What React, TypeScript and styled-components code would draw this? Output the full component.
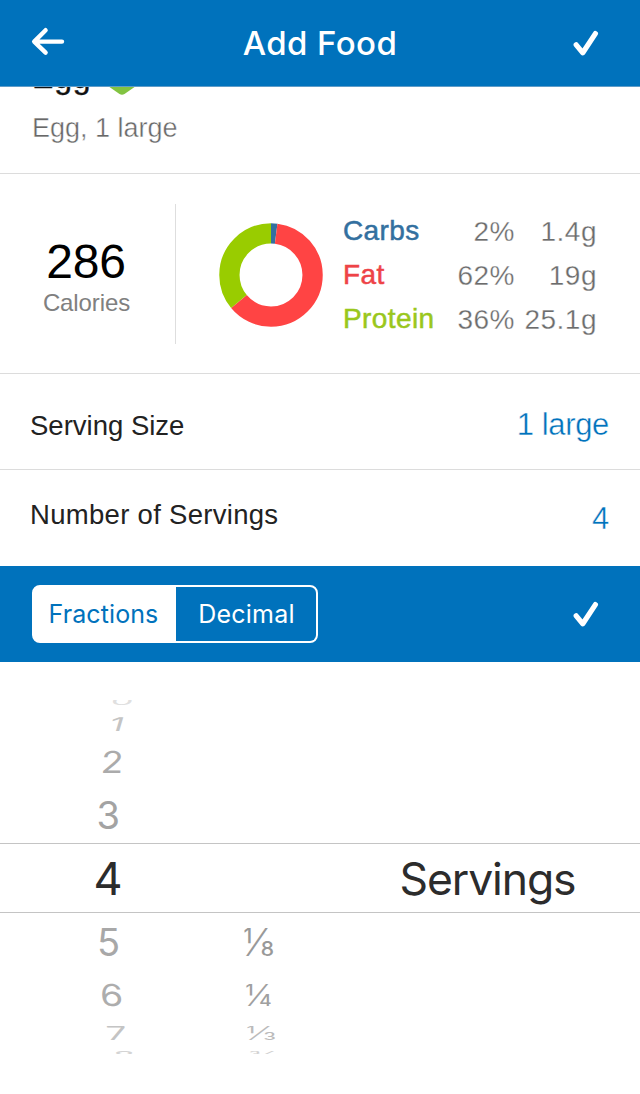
import React from "react";
import styled, { createGlobalStyle } from "styled-components";

const BLUE = "#0072bc";
const HELV = `"Liberation Sans", Arial, Helvetica, sans-serif`;
const SF = `Inter, "Liberation Sans", sans-serif`;

const GlobalStyle = createGlobalStyle`
  * { box-sizing: border-box; }
  body { margin: 0; background: #fff; }
`;

const Screen = styled.main`
  width: 640px;
  height: 1094px;
  overflow: hidden;
  display: flex;
  flex-direction: column;
  background: #fff;
  color: #222;
  font-family: ${HELV};
`;

const NavBar = styled.header`
  flex: none;
  height: 87px;
  display: grid;
  grid-template-columns: 120px 1fr 120px;
  align-items: start;
  background: ${BLUE};
  border-bottom: 1px solid #5f9cc8;
`;

const NavTitle = styled.h1`
  margin: 0;
  text-align: center;
  font: 500 33px/40px ${SF};
  padding-top: 23px;
  letter-spacing: 0.4px;
  color: #fff;
`;

const IconButton = styled.button<{ $side: "left" | "right"; $top: number }>`
  display: flex;
  justify-content: ${(p) => (p.$side === "left" ? "flex-start" : "flex-end")};
  border: 0;
  background: none;
  padding: ${(p) => p.$top}px ${(p) => (p.$side === "right" ? 40 : 0)}px 0
    ${(p) => (p.$side === "left" ? 30 : 0)}px;
`;

const FoodSummary = styled.section`
  flex: none;
  height: 87px;
  overflow: hidden;
  border-bottom: 1px solid #dcdcdc;
  padding-left: 32px;
`;

const FoodName = styled.div`
  display: flex;
  align-items: flex-start;
  gap: 16px;
  height: 36px;
  margin-top: -28px;
  font-size: 32px;
  line-height: 36px;
  letter-spacing: 0.8px;
  color: #111;
  -webkit-text-stroke: 0.4px #111;
`;

const FoodDetail = styled.div`
  margin-top: 16px;
  font-size: 27px;
  line-height: 34px;
  color: #686868;
  -webkit-text-stroke: 0.4px #fff;
`;

const Nutrition = styled.section`
  flex: none;
  height: 200px;
  display: flex;
  align-items: flex-start;
  border-bottom: 1px solid #dcdcdc;
`;

const Calories = styled.div`
  width: 176px;
  height: 140px;
  margin-top: 30px;
  padding: 31px 3px 0 0;
  border-right: 1px solid #dedede;
  text-align: center;
`;

const CalorieCount = styled.div`
  font-size: 48px;
  line-height: 54px;
  letter-spacing: -0.2px;
  color: #000;
`;

const CalorieLabel = styled.div`
  padding-left: 1px;
  font-size: 24px;
  line-height: 28px;
  letter-spacing: -0.1px;
  color: #808080;
`;

const Donut = styled.svg`
  flex: none;
  margin: 48px 0 0 42px;
`;

const MacroTable = styled.div`
  display: grid;
  grid-template-columns: 92px 80px 82px;
  grid-auto-rows: 44px;
  margin: 36px 0 0 19px;
`;

const MacroName = styled.span<{ $color: string }>`
  font-size: 28px;
  line-height: 42px;
  letter-spacing: 0.4px;
  color: ${(p) => p.$color};
  -webkit-text-stroke: 0.5px ${(p) => p.$color};
`;

const MacroValue = styled.span`
  font-size: 28px;
  line-height: 44px;
  letter-spacing: 0.5px;
  text-align: right;
  white-space: nowrap;
  color: #6c6c6c;
  -webkit-text-stroke: 0.3px #fff;
`;

const Field = styled.div<{ $height: number; $line?: boolean }>`
  flex: none;
  height: ${(p) => p.$height}px;
  display: flex;
  justify-content: space-between;
  align-items: flex-start;
  padding: 0 31px 0 30px;
  border-bottom: ${(p) => (p.$line ? "1px solid #dcdcdc" : "0")};
`;

const FieldLabel = styled.span<{ $top: number; $track?: number }>`
  padding-top: ${(p) => p.$top}px;
  font-size: 27.5px;
  line-height: 32px;
  letter-spacing: ${(p) => p.$track ?? 0}px;
  color: #222;
`;

const FieldValue = styled.span<{ $top: number }>`
  padding-top: ${(p) => p.$top}px;
  font-size: 31px;
  line-height: 36px;
  letter-spacing: -0.35px;
  color: ${BLUE};
  -webkit-text-stroke: 0.4px #fff;
`;

const Toolbar = styled.div`
  flex: none;
  height: 96px;
  display: flex;
  justify-content: space-between;
  align-items: flex-start;
  padding-left: 32px;
  background: ${BLUE};
`;

const Segmented = styled.div`
  display: flex;
  width: 286px;
  height: 58px;
  margin-top: 19px;
  border: 2px solid #fff;
  border-radius: 8px;
  background: #fff;
  overflow: hidden;
`;

const Segment = styled.button<{ $active?: boolean; $width: number }>`
  width: ${(p) => p.$width}px;
  height: 54px;
  padding: ${(p) => (p.$active ? "0 3px 0 0" : "0 0 0 1px")};
  border: 0;
  font: 400 25px/54px ${SF};
  letter-spacing: ${(p) => (p.$active ? 0.1 : 0.2)}px;
  color: ${(p) => (p.$active ? BLUE : "#fff")};
  background: ${(p) => (p.$active ? "#fff" : BLUE)};
`;

const Picker = styled.section`
  flex: none;
  display: grid;
  grid-template-columns: 220px 160px 260px;
  padding-top: 38px;
  font-family: ${SF};
`;

const Wheel = styled.div<{ $weight?: number }>`
  display: flex;
  flex-direction: column;
  font-weight: ${(p) => p.$weight ?? 400};
`;

const WheelRow = styled.div<{ $height: number; $selected?: boolean; $indent: number }>`
  display: flex;
  align-items: center;
  height: ${(p) => p.$height}px;
  padding-left: ${(p) => p.$indent}px;
  overflow: hidden;
  border: 0 solid #c4c4c4;
  border-width: ${(p) => (p.$selected ? "1px 0" : "0")};
`;

const WheelText = styled.span<{ $size: number; $color: string; $squash?: number; $skew?: number; $shift?: number; $track?: number }>`
  display: block;
  font-size: ${(p) => p.$size}px;
  line-height: 56px;
  letter-spacing: ${(p) => p.$track ?? 0}px;
  white-space: nowrap;
  color: ${(p) => p.$color};
  transform: translateY(${(p) => p.$shift ?? 0}px) scaleY(${(p) => p.$squash ?? 1})
    skewX(${(p) => p.$skew ?? 0}deg);
`;

type Row = {
  text: string;
  height: number;
  indent: number;
  size: number;
  color: string;
  squash?: number;
  skew?: number;
  shift?: number;
  selected?: boolean;
};

const wholeRows: Row[] = [
  { text: "0", height: 8, indent: 111, size: 36, color: "#e0e0e0", squash: 0.3, skew: -4, shift: -3 },
  { text: "1", height: 31, indent: 110, size: 35, color: "#c4c4c4", squash: 0.54, skew: -9, shift: -0.5 },
  { text: "2", height: 47, indent: 101, size: 37, color: "#ababab", squash: 0.82, skew: -3, shift: -1 },
  { text: "3", height: 57, indent: 96.5, size: 38, color: "#a3a3a3" },
  { text: "4", height: 70, indent: 93.5, size: 45, color: "#2c2c2c", selected: true, shift: 1 },
  { text: "5", height: 58, indent: 97, size: 38, color: "#a8a8a8", shift: -0.5 },
  { text: "6", height: 49, indent: 100, size: 37, color: "#adadad", squash: 0.82, skew: 3, shift: -0.5 },
  { text: "7", height: 28, indent: 106, size: 37, color: "#c4c4c4", squash: 0.52, skew: 4, shift: -0.5 },
  { text: "8", height: 6, indent: 113, size: 36, color: "#d4d4d4", squash: 0.3, shift: 4 },
];

const fractionRows: Row[] = [
  { text: "", height: 143, indent: 0, size: 38, color: "#aaa" },
  { text: "", height: 70, indent: 0, size: 45, color: "#2c2c2c", selected: true },
  { text: "⅛", height: 58, indent: 23, size: 38.5, color: "#999", shift: -0.5 },
  { text: "¼", height: 49, indent: 25, size: 36, color: "#a0a0a0", squash: 0.82, shift: -0.5 },
  { text: "⅓", height: 28, indent: 26, size: 37, color: "#bbb", squash: 0.52, shift: -0.5 },
  { text: "⅜", height: 6, indent: 28, size: 36, color: "#d0d0d0", squash: 0.3, shift: 4 },
];

const unitRows: Row[] = [
  { text: "", height: 143, indent: 0, size: 38, color: "#aaa" },
  { text: "Servings", height: 70, indent: 19.5, size: 44.5, color: "#2c2c2c", selected: true, shift: 1 },
];

const macros = [
  { name: "Carbs", percent: "2%", grams: "1.4g", color: "#33709f" },
  { name: "Fat", percent: "62%", grams: "19g", color: "#ee4347" },
  { name: "Protein", percent: "36%", grams: "25.1g", color: "#9ac71c" },
];

const slices = [
  { color: "#33709f", from: 0, size: 2 },
  { color: "#ff4444", from: 2, size: 62 },
  { color: "#99cc00", from: 64, size: 36 },
];

const CheckIcon = () => (
  <svg width="30" height="32" viewBox="0 0 30 32" fill="none">
    <path d="M6.2 16.8 12.8 24.8 25.4 5.6" stroke="#fff" strokeWidth="5.2" strokeLinecap="round" strokeLinejoin="round" />
  </svg>
);

const BackIcon = () => (
  <svg width="36" height="32" viewBox="0 0 36 32" fill="none">
    <path d="M15.6 4.2 4.2 15.6 15.6 26.6M4.5 15.6H32" stroke="#fff" strokeWidth="4.4" strokeLinecap="round" strokeLinejoin="round" />
  </svg>
);

const Shield = () => (
  <svg width="30" height="37" viewBox="0 0 30 37">
    <path d="M1 6 15 2 29 6V27L17.5 35Q15 36.6 12.5 35L1 27Z" fill="#82c341" />
  </svg>
);

const WheelColumn = ({ rows, track, weight }: { rows: Row[]; track?: number; weight?: number }) => (
  <Wheel $weight={weight}>
    {rows.map((r, i) => (
      <WheelRow key={i} $height={r.height} $indent={r.indent} $selected={r.selected}>
        <WheelText $size={r.size} $color={r.color} $squash={r.squash} $skew={r.skew} $shift={r.shift} $track={track}>
          {r.text}
        </WheelText>
      </WheelRow>
    ))}
  </Wheel>
);

export default function App() {
  return (
    <Screen>
      <GlobalStyle />
      <NavBar>
        <IconButton $side="left" $top={26} aria-label="Back">
          <BackIcon />
        </IconButton>
        <NavTitle>Add Food</NavTitle>
        <IconButton $side="right" $top={28} aria-label="Save">
          <CheckIcon />
        </IconButton>
      </NavBar>

      <FoodSummary>
        <FoodName>
          Egg <Shield />
        </FoodName>
        <FoodDetail>Egg, 1 large</FoodDetail>
      </FoodSummary>

      <Nutrition>
        <Calories>
          <CalorieCount>286</CalorieCount>
          <CalorieLabel>Calories</CalorieLabel>
        </Calories>
        <Donut width="106" height="106" viewBox="-53 -53 106 106">
          {slices.map((s) => (
            <circle
              key={s.color}
              r="41.6"
              fill="none"
              stroke={s.color}
              strokeWidth="20.3"
              pathLength={100}
              strokeDasharray={`${s.size} ${100 - s.size}`}
              strokeDashoffset={-s.from}
              transform="rotate(-90)"
            />
          ))}
        </Donut>
        <MacroTable>
          {macros.map((m) => (
            <React.Fragment key={m.name}>
              <MacroName $color={m.color}>{m.name}</MacroName>
              <MacroValue>{m.percent}</MacroValue>
              <MacroValue>{m.grams}</MacroValue>
            </React.Fragment>
          ))}
        </MacroTable>
      </Nutrition>

      <Field $height={96} $line>
        <FieldLabel $top={36}>Serving Size</FieldLabel>
        <FieldValue $top={33}>1 large</FieldValue>
      </Field>
      <Field $height={96}>
        <FieldLabel $top={29} $track={0.3}>Number of Servings</FieldLabel>
        <FieldValue $top={31}>4</FieldValue>
      </Field>

      <Toolbar>
        <Segmented>
          <Segment $width={142} $active>Fractions</Segment>
          <Segment $width={140}>Decimal</Segment>
        </Segmented>
        <IconButton $side="right" $top={33} aria-label="Done">
          <CheckIcon />
        </IconButton>
      </Toolbar>

      <Picker>
        <WheelColumn rows={wholeRows} />
        <WheelColumn rows={fractionRows} weight={300} />
        <WheelColumn rows={unitRows} track={-1.1} />
      </Picker>
    </Screen>
  );
}
